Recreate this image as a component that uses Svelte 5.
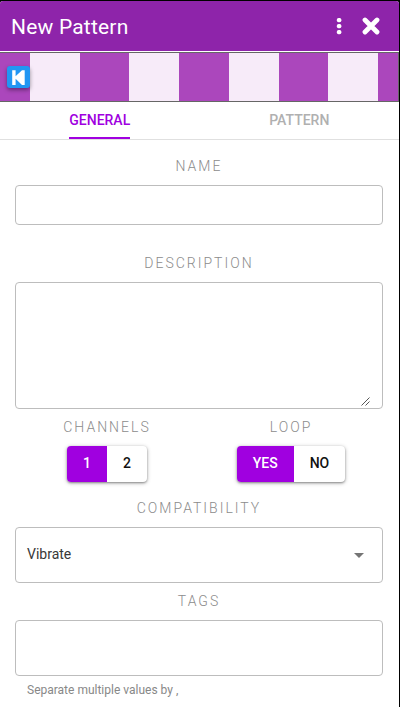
<script>
  let tab = $state('General');
  let channels = $state('1');
  let loop = $state('Yes');
</script>

<main class="window">
  <header>
    <h1>New Pattern</h1>
    <button class="icon more" aria-label="More options">
      <svg width="6" height="18" viewBox="0 0 6 18" fill="#fff">
        <rect x="0.8" y="1" width="4.6" height="4.2" rx="1.8" />
        <rect x="0.8" y="7" width="4.6" height="4.2" rx="1.8" />
        <rect x="0.8" y="13" width="4.6" height="4.2" rx="1.8" />
      </svg>
    </button>
    <button class="icon close" aria-label="Close">
      <svg width="18" height="18" viewBox="0 0 18 18" fill="none" stroke="#fff" stroke-width="4.8" stroke-linecap="round">
        <path d="M3 3 15 15M15 3 3 15" />
      </svg>
    </button>
  </header>

  <div class="preview">
    <button class="rewind" aria-label="Go to start">
      <svg width="23" height="22" viewBox="0 0 23 22" fill="#fff">
        <path d="M5.2 4.2H8.6V10.2L15 4.2H17.7V18.9H15L8.6 12.8V18.9H5.2Z" />
      </svg>
    </button>
  </div>

  <nav>
    {#each ['General', 'Pattern'] as name}
      <button class="tab" class:active={tab === name} onclick={() => (tab = name)}><span>{name}</span></button>
    {/each}
  </nav>

  <form>
    <label for="name">Name</label>
    <input id="name" class="field name" />
    <label for="description" class="desc-label">Description</label>
    <div class="field description">
      <textarea id="description"></textarea>
      <svg class="grip" width="10" height="9" viewBox="0 0 10 9" stroke="#555" stroke-width="1">
        <path d="M0.5 8.5 8.5 0.5M4.5 8.5 8.5 4.5" />
      </svg>
    </div>
    <div class="pair">
      <section>
        <div class="label">Channels</div>
        <div class="group">
          {#each ['1', '2'] as v}
            <button type="button" class:on={channels === v} onclick={() => (channels = v)}>{v}</button>
          {/each}
        </div>
      </section>
      <section>
        <div class="label">Loop</div>
        <div class="group">
          {#each ['Yes', 'No'] as v}
            <button type="button" class:on={loop === v} onclick={() => (loop = v)}>{v}</button>
          {/each}
        </div>
      </section>
    </div>
    <div class="label">Compatibility</div>
    <div class="field select">
      <span>Vibrate</span>
      <svg width="10" height="5" viewBox="0 0 10 5" fill="#757575"><path d="M0 0H10L5 5Z" /></svg>
    </div>
    <label for="tags">Tags</label>
    <input id="tags" class="field tags" />
    <p>Separate multiple values by ,</p>
  </form>
</main>

<style>
  :global(body) { background: #000; overflow: hidden; }
  * { box-sizing: border-box; }
  .window {
    width: 399px; height: 706px; margin-top: 1px; overflow: hidden;
    background: #fff; border-radius: 3px 3px 0 0;
    font-family: Roboto, sans-serif; color: #222;
  }
  button { font: inherit; border: 0; padding: 0; background: none; cursor: pointer; }
  svg { display: block; }
  header { height: 50px; display: flex; align-items: center; background: #8e24aa; padding: 0 19px 0 11px; }
  h1 { margin: 0 auto 0 0; padding-top: 2px; color: #fff; font-size: 21px; font-weight: 400; line-height: 48px; letter-spacing: 0.2px; }
  .more { margin-right: 20px; }
  .preview {
    height: 50px; margin-top: 1px; padding: 13px 0 0 7px;
    border: solid #666; border-width: 1px 1px 1px 0;
    background: repeating-linear-gradient(90deg, #f7ebf9 0 49.75px, #ab47bc 49.75px 99.5px) 30px 0 / 398px 100% no-repeat, #ab47bc;
  }
  .rewind { display: block; width: 23px; height: 22px; border-radius: 3px; background: #2196f3; box-shadow: 0 2px 4px rgba(0, 0, 0, 0.4); }
  nav { height: 38px; display: flex; border-bottom: 1px solid #e0e0e0; }
  .tab { flex: 1; display: flex; justify-content: center; color: #b0b0b0; font-size: 14px; font-weight: 500; text-transform: uppercase; }
  .tab span { height: 37px; line-height: 37px; border-bottom: 2px solid transparent; }
  .active { color: #a000e0; }
  .active span { border-color: #a000e0; }
  form { padding: 15px 16px 0 15px; }
  label, .label { display: block; height: 22px; line-height: 22px; text-align: center; text-transform: uppercase; font-size: 14px; font-weight: 300; letter-spacing: 2px; color: #8c8c8c; }
  .field { display: block; width: 100%; border: 1px solid #bdbdbd; border-radius: 4px; background: #fff; outline: none; }
  .name { height: 40px; margin-top: 8px; }
  .desc-label { margin-top: 27px; }
  .description { height: 127px; margin-top: 8px; padding: 3px 11px 2px; display: grid; }
  textarea { grid-area: 1 / 1; border: 0; outline: none; resize: none; padding: 0; font: inherit; }
  .grip { grid-area: 1 / 1; place-self: end; }
  .pair { display: grid; grid-template-columns: 1fr 1fr; margin: 7px 0 15px; }
  section { display: flex; flex-direction: column; align-items: center; }
  .group { display: flex; height: 36px; margin-top: 8px; border-radius: 4px; overflow: hidden; background: #fff; box-shadow: 0 1px 4px rgba(0, 0, 0, 0.3), 0 1px 2px rgba(0, 0, 0, 0.3); }
  .group button { padding: 0 16px 2px; font-size: 14px; font-weight: 500; line-height: 34px; text-transform: uppercase; color: #111; }
  .group .on { background: #a000e0; color: #fff; }
  .select { display: flex; align-items: center; justify-content: space-between; height: 56px; margin-top: 8px; padding: 0 18px 0 11px; font-size: 14px; color: #383838; }
  .select span { padding-bottom: 2px; }
  .select + label { margin-top: 7px; }
  .tags { height: 56px; margin-top: 8px; }
  p { margin: 5px 0 0 12px; font-size: 12px; line-height: 18px; color: #888; }
</style>
